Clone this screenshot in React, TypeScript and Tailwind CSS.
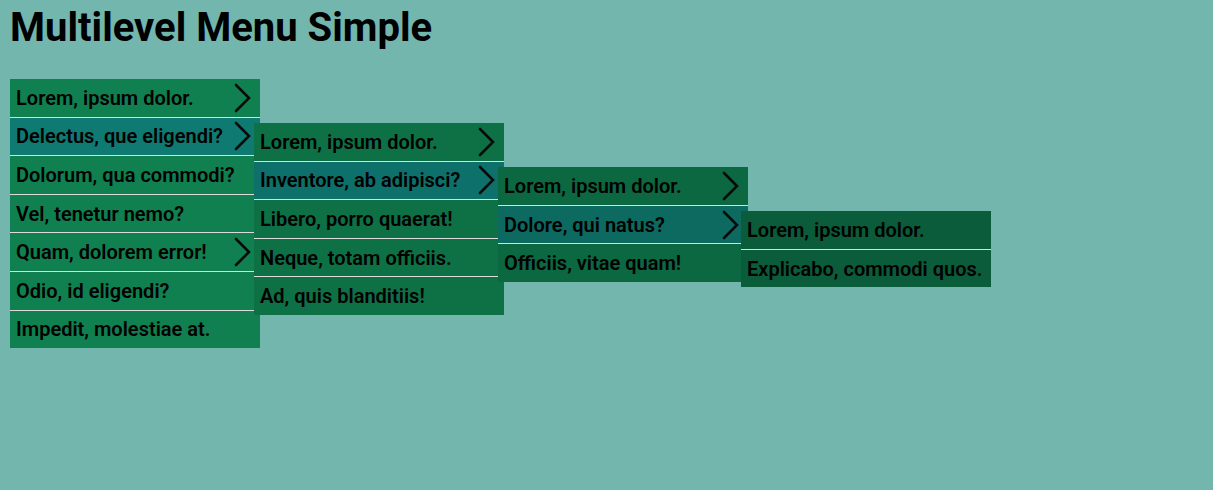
import React from "react";

type Item = { label: string; children?: Item[]; open?: boolean; arrow?: boolean };

const menu: Item[] = [
  { label: "Lorem, ipsum dolor.", arrow: true },
  {
    label: "Delectus, que eligendi?",
    arrow: true,
    open: true,
    children: [
      { label: "Lorem, ipsum dolor.", arrow: true },
      {
        label: "Inventore, ab adipisci?",
        arrow: true,
        open: true,
        children: [
          { label: "Lorem, ipsum dolor.", arrow: true },
          {
            label: "Dolore, qui natus?",
            arrow: true,
            open: true,
            children: [
              { label: "Lorem, ipsum dolor." },
              { label: "Explicabo, commodi quos." },
            ],
          },
          { label: "Officiis, vitae quam!" },
        ],
      },
      { label: "Libero, porro quaerat!" },
      { label: "Neque, totam officiis." },
      { label: "Ad, quis blanditiis!" },
    ],
  },
  { label: "Dolorum, qua commodi?" },
  { label: "Vel, tenetur nemo?" },
  { label: "Quam, dolorem error!", arrow: true },
  { label: "Odio, id eligendi?" },
  { label: "Impedit, molestiae at." },
];

const levelBg = ["bg-[#108050]", "bg-[#0e7146]", "bg-[#0c6840]", "bg-[#0b5c3a]"];
const levelHover = ["bg-[#0f7a72]", "bg-[#0e706a]", "bg-[#0c6a60]", "bg-[#0b5c56]"];

function Chevron() {
  return (
    <svg
      width="17"
      height="30"
      viewBox="0 0 17 30"
      className="absolute right-[9px] top-1/2 -translate-y-1/2"
      fill="none"
    >
      <polyline
        points="2,2 15,15 2,28"
        stroke="#0a0a0a"
        strokeWidth="2.6"
        strokeLinecap="round"
        strokeLinejoin="miter"
      />
    </svg>
  );
}

function Menu({ items, level }: { items: Item[]; level: number }) {
  return (
    <ul className={`w-[250px] ${levelBg[level]} flex flex-col`}>
      {items.map((it, i) => (
        <li
          key={i}
          className={`relative h-[37.6px] flex items-center pl-[6px] ${
            i > 0 ? "border-t border-[#dcdcdc]" : ""
          } ${it.open ? levelHover[level] : ""} box-content`}
        >
          <span className="text-[20px] font-semibold text-black leading-none whitespace-nowrap">
            {it.label}
          </span>
          {it.arrow && <Chevron />}
          {it.open && it.children && (
            <div className={`absolute ${level === 2 ? "left-[243px]" : "left-[244px]"} top-[5.5px] z-10`}>
              <Menu items={it.children} level={level + 1} />
            </div>
          )}
        </li>
      ))}
    </ul>
  );
}

export default function App() {
  return (
    <div
      className="min-h-[490px] w-full bg-[#72b6ae] px-[10px] pt-[4px]"
      style={{ fontFamily: "Roboto, 'Liberation Sans', sans-serif" }}
    >
      <h1 className="text-[40px] font-bold text-black leading-[47px]">Multilevel Menu Simple</h1>
      <div className="mt-[28px]">
        <Menu items={menu} level={0} />
      </div>
    </div>
  );
}
